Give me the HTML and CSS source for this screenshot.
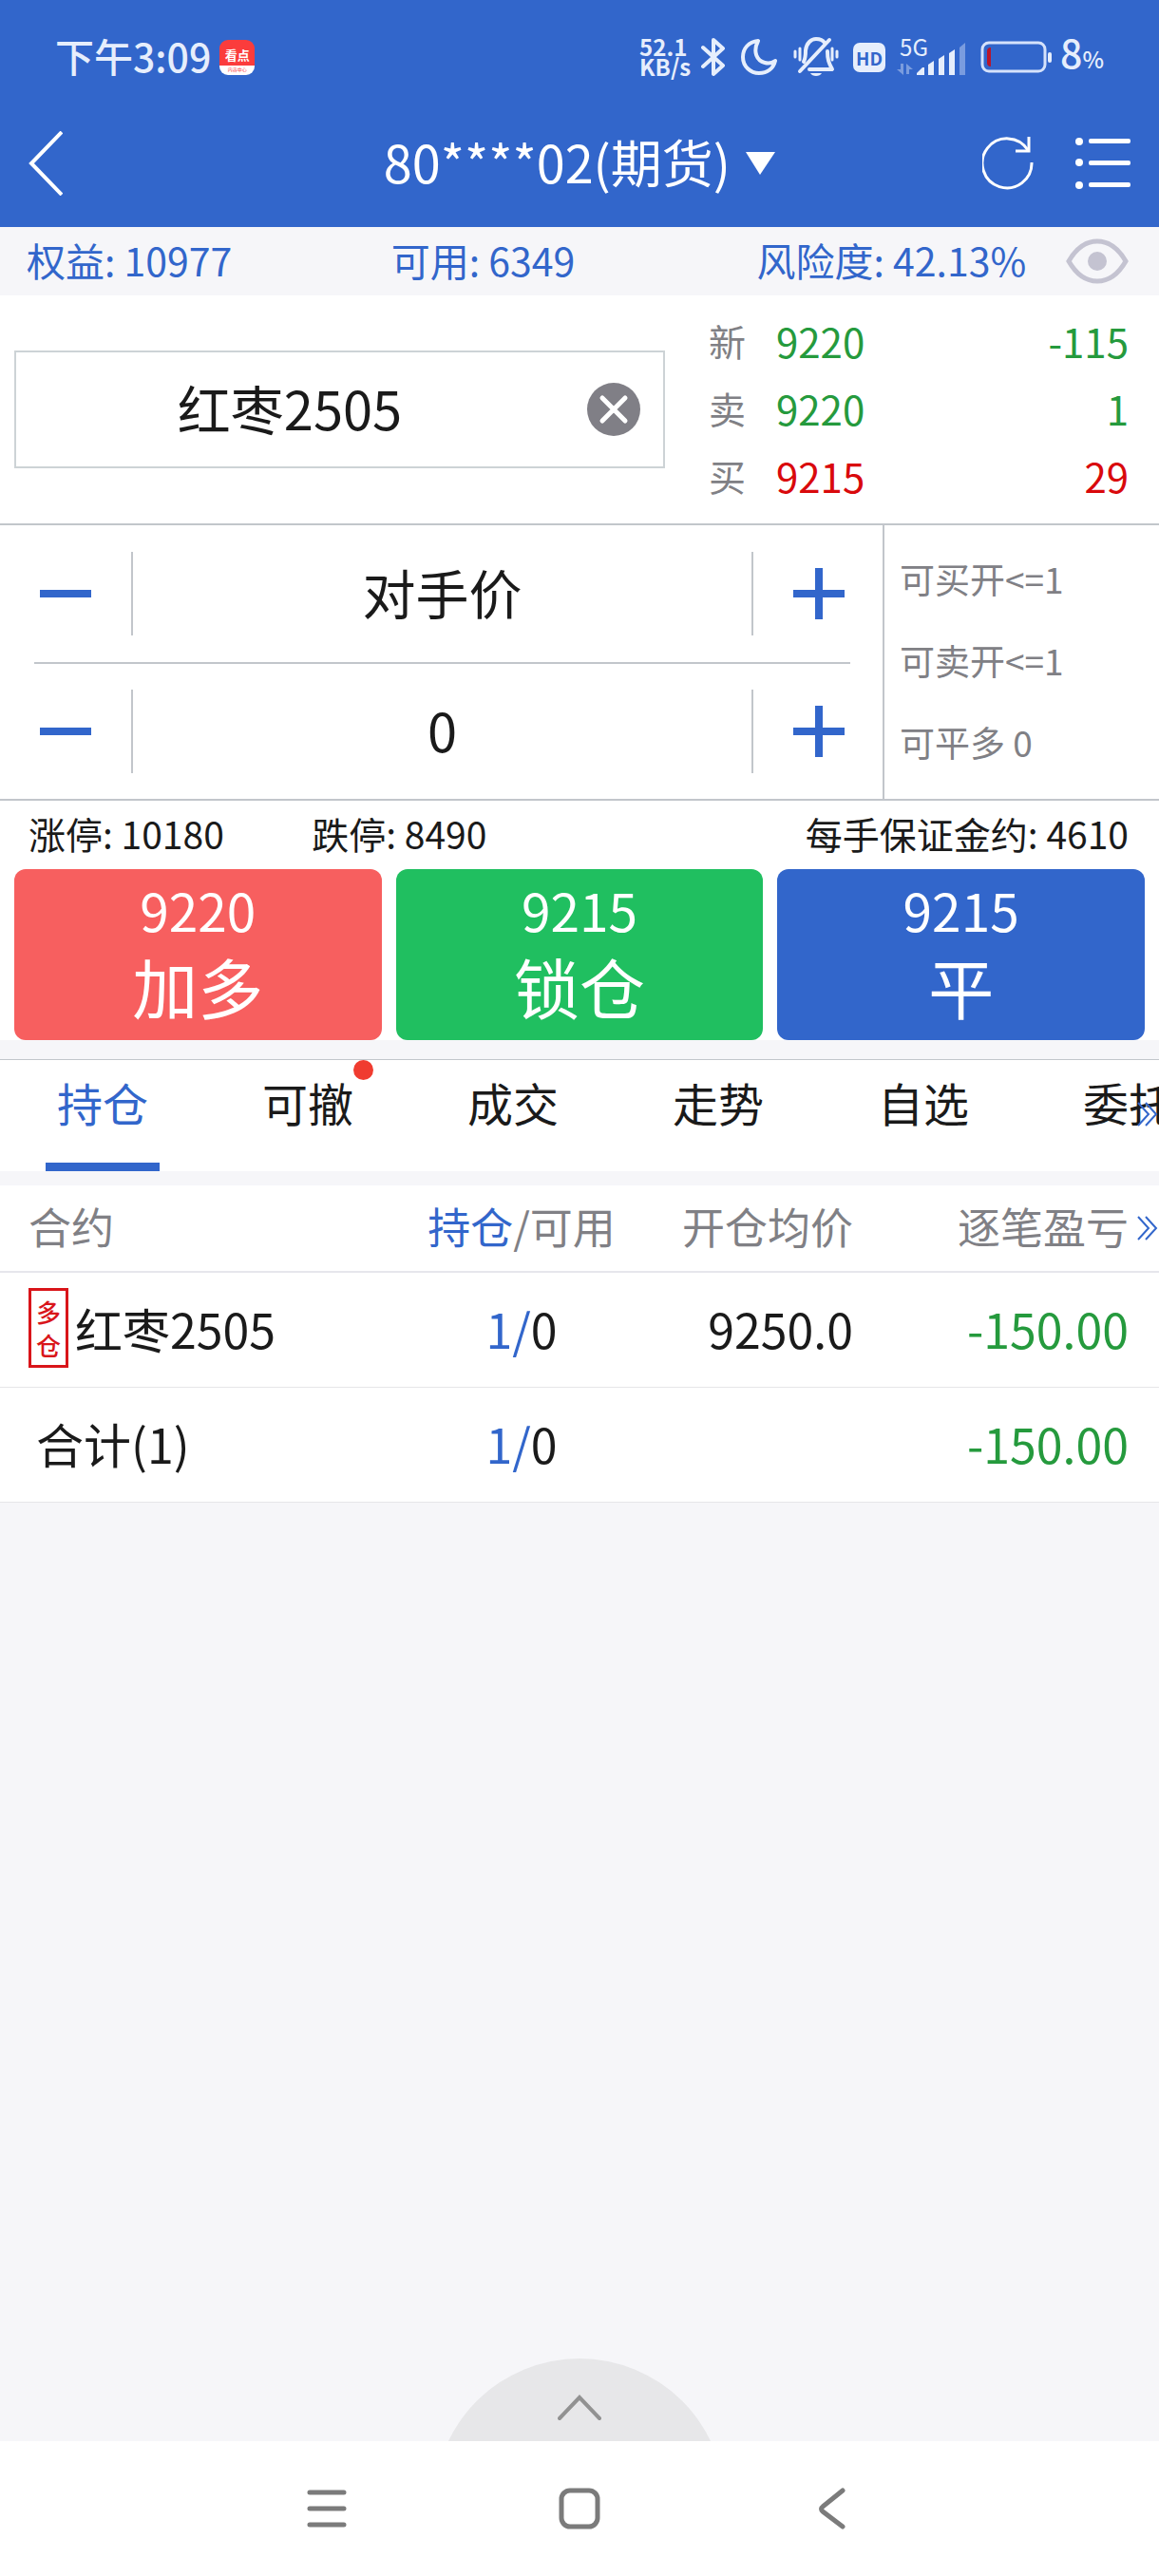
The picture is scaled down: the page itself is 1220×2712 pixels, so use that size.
FILE: index.html
```html
<!DOCTYPE html>
<html lang="zh-CN">
<head>
    <meta charset="UTF-8">
    <meta name="viewport" content="width=device-width, initial-scale=1.0">
    <title>期货交易</title>
    <link rel="stylesheet" href="styles.css">
</head>
<body>

    <header class="header">
        <div class="status-bar">
            <span class="clock">下午3:09</span>
            <span class="app-badge"><b>看点</b><i>内容中心</i></span>

            <div class="status-icons">
                <div class="net-speed"><span>52.1</span><span>KB/s</span></div>
                <svg width="26" height="42" viewBox="0 0 26 42" fill="none" stroke="#e6eefc" stroke-width="4" stroke-linejoin="round" stroke-linecap="round">
                    <path d="M2 11 L23 30 L13 39 V3 L23 12 L2 31"/>
                </svg>
                <svg class="moon" width="38" height="38" viewBox="0 0 38 38" fill="none" stroke="#e6eefc" stroke-width="4" stroke-linejoin="round">
                    <path d="M18 2 C8 3 2 10 2 19 C2 29 10 36 19 36 C28 36 34 31 36 23 C32 26 29 26 25 25 C17 23 12 14 18 2 Z"/>
                </svg>
                <svg class="bell" width="48" height="42" viewBox="0 0 48 42" fill="none" stroke="#e6eefc" stroke-width="3" stroke-linecap="round" stroke-linejoin="round">
                    <path d="M11 26 C13 22 13 19 13 14 C14 6 19 2 24 2 C28 2 31 3 33 6" stroke-width="4"/>
                    <path d="M36 15 C36 25 38 28 41 34 H17" stroke-width="4"/>
                    <path d="M38 3 L7 36" stroke-width="4"/>
                    <path d="M2 15 V21 M7 12 V24 M41 12 V24 M46 15 V21"/>
                    <path d="M18 38 H30 C28 42 20 42 18 38 Z" fill="#e6eefc" stroke="none"/>
                </svg>
                <span class="hd">HD</span>
                <div class="signal">
                    <span class="signal-type">5G</span>
                    <svg width="74" height="38" viewBox="0 0 74 38" fill="#e6eefc">
                        <g opacity="0.4">
                            <path d="M4 26 H7 V38 L0 32 H4 Z"/>
                            <path d="M10 26 L17 32 H13 V37 H10 Z"/>
                        </g>
                        <path d="M21 36 L27 30 H29 V38 H21 Z"/>
                        <path d="M33 27 L39 23 V38 H33 Z"/>
                        <path d="M44 21 L50 17 V38 H44 Z"/>
                        <path d="M55 15 L61 11 V38 H55 Z"/>
                        <path d="M66 9 L72 4 V38 H66 Z" opacity="0.4"/>
                    </svg>
                </div>
                <svg class="battery" width="76" height="34" viewBox="0 0 76 34">
                    <rect x="2" y="2" width="66" height="30" rx="7" fill="none" stroke="#d5e2fb" stroke-width="3"/>
                    <path d="M7 11 Q7 7 11 7 V27 Q7 27 7 23 Z" fill="#b9152b"/>
                    <rect x="71" y="12" width="4" height="11" rx="2" fill="#e6eefc"/>
                </svg>
                <span class="percent">8<small>%</small></span>
            </div>
        </div>

        <div class="title-bar">
            <button class="icon-btn" aria-label="返回">
                <svg width="36" height="68" viewBox="0 0 36 68" fill="none" stroke="#fff" stroke-width="4">
                    <path d="M35 1 L3 34 L35 67"/>
                </svg>
            </button>
            <button class="account">
                <span>80****02(期货)</span>
                <svg width="31" height="24" viewBox="0 0 31 24" fill="#fff"><path d="M0 0 H31 L15 24 Z"/></svg>
            </button>
            <div class="title-actions">
                <button class="icon-btn" aria-label="刷新">
                    <svg width="54" height="56" viewBox="0 0 54 56" fill="none" stroke="#fff" stroke-width="3">
                        <path d="M52 27 A26 26 0 1 1 48 14"/>
                        <path d="M49 0 V15 H35"/>
                    </svg>
                </button>
                <button class="icon-btn" aria-label="菜单">
                    <svg width="58" height="54" viewBox="0 0 58 54" fill="#fff">
                        <circle cx="4" cy="4" r="4"/><rect x="14" y="1" width="44" height="5" rx="2"/>
                        <circle cx="4" cy="26" r="4"/><rect x="14" y="24" width="44" height="5" rx="2"/>
                        <circle cx="4" cy="50" r="4"/><rect x="14" y="47" width="44" height="5" rx="2"/>
                    </svg>
                </button>
            </div>
        </div>
    </header>

    <div class="funds">
        <span>权益: 10977</span>
        <span>可用: 6349</span>
        <span>风险度: 42.13%</span>
        <button class="icon-btn" aria-label="显示资金">
            <svg width="66" height="48" viewBox="0 0 66 48" fill="none" stroke="#c4c3d1" stroke-width="5">
                <path d="M3 24 C19 -4 47 -4 63 24 C47 52 19 52 3 24 Z"/>
                <circle cx="33" cy="24" r="10" fill="#c4c3d1" stroke="none"/>
            </svg>
        </button>
    </div>

    <section class="quote">
        <div class="contract">
            <input type="text" value="红枣2505" aria-label="合约">
            <button class="icon-btn" aria-label="清除">
                <svg width="58" height="58" viewBox="0 0 58 58">
                    <circle cx="29" cy="29" r="28" fill="#807f86"/>
                    <path d="M17 17 L41 41 M41 17 L17 41" stroke="#fff" stroke-width="5" stroke-linecap="round"/>
                </svg>
            </button>
        </div>
        <div class="prices">
            <div class="price-row green"><span class="label">新</span><span>9220</span><span class="volume">-115</span></div>
            <div class="price-row green"><span class="label">卖</span><span>9220</span><span class="volume">1</span></div>
            <div class="price-row red"><span class="label">买</span><span>9215</span><span class="volume">29</span></div>
        </div>
    </section>

    <section class="order">
        <div class="steppers">
            <div class="stepper">
                <button class="step minus" aria-label="减价"></button>
                <input type="text" value="对手价" aria-label="价格">
                <button class="step plus" aria-label="加价"></button>
            </div>
            <div class="stepper">
                <button class="step minus" aria-label="减手数"></button>
                <input type="text" value="0" aria-label="手数">
                <button class="step plus" aria-label="加手数"></button>
            </div>
        </div>
        <div class="available">
            <span>可买开&lt;=1</span>
            <span>可卖开&lt;=1</span>
            <span>可平多 0</span>
        </div>
    </section>

    <div class="limits">
        <span>涨停: 10180</span>
        <span>跌停: 8490</span>
        <span class="margin">每手保证金约: 4610</span>
    </div>

    <div class="trade">
        <button class="trade-btn buy"><span>9220</span><strong>加多</strong></button>
        <button class="trade-btn lock"><span>9215</span><strong>锁仓</strong></button>
        <button class="trade-btn close"><span>9215</span><strong>平</strong></button>
    </div>

    <nav class="tabs">
        <button class="tab active">持仓</button>
        <button class="tab"><span class="dot"></span>可撤</button>
        <button class="tab">成交</button>
        <button class="tab">走势</button>
        <button class="tab">自选</button>
        <button class="tab">委托</button>
        <svg class="more" width="22" height="26" viewBox="0 0 22 26" fill="none" stroke="#3266cb" stroke-width="2">
            <path d="M1 1 L12 13 L1 25 M9 1 L20 13 L9 25"/>
        </svg>
    </nav>

    <div class="positions">
        <table>
            <thead>
                <tr>
                    <th class="col-name">合约</th>
                    <th class="col-hold"><span class="blue">持仓</span>/可用</th>
                    <th>开仓均价</th>
                    <th class="col-profit">逐笔盈亏</th>
                </tr>
            </thead>
            <tbody>
                <tr>
                    <td><div class="name"><span class="side">多仓</span>红枣2505</div></td>
                    <td><span class="blue">1/</span>0</td>
                    <td>9250.0</td>
                    <td class="green">-150.00</td>
                </tr>
                <tr>
                    <td class="total">合计(1)</td>
                    <td><span class="blue">1/</span>0</td>
                    <td></td>
                    <td class="green">-150.00</td>
                </tr>
            </tbody>
        </table>
        <svg class="more" width="22" height="26" viewBox="0 0 22 26" fill="none" stroke="#3266cb" stroke-width="2">
            <path d="M1 1 L12 13 L1 25 M9 1 L20 13 L9 25"/>
        </svg>
    </div>

    <div class="drawer">
        <button class="drawer-handle" aria-label="展开">
            <svg width="46" height="28" viewBox="0 0 46 28" fill="none" stroke="#929292" stroke-width="4" stroke-linecap="round">
                <path d="M2 25 L23 3 L44 25"/>
            </svg>
        </button>
    </div>

    <footer class="nav-bar">
        <button class="icon-btn" aria-label="最近任务">
            <svg width="44" height="44" viewBox="0 0 44 44" stroke="#7b7b7b" stroke-width="5" stroke-linecap="round">
                <path d="M4 5 H40 M4 22 H40 M4 39 H40"/>
            </svg>
        </button>
        <button class="icon-btn" aria-label="主屏幕">
            <svg width="44" height="44" viewBox="0 0 44 44" fill="none" stroke="#7b7b7b" stroke-width="5">
                <rect x="3" y="3" width="38" height="38" rx="9"/>
            </svg>
        </button>
        <button class="icon-btn" aria-label="返回上级">
            <svg width="44" height="44" viewBox="0 0 44 44" fill="none" stroke="#7b7b7b" stroke-width="5" stroke-linecap="round">
                <path d="M33 3 L12 20 Q9 22 12 25 L33 41"/>
            </svg>
        </button>
    </footer>

</body>
</html>
```

FILE: styles.css
```css
* {
    box-sizing: border-box;
}

body {
    margin: 0;
    min-height: 100vh;
    display: flex;
    flex-direction: column;
    font-family: "Noto Sans CJK SC", "Noto Sans", sans-serif;
    color: #1a1a1a;
    background-color: #f6f6f9;
    overflow-x: hidden;
}

button,
input {
    font-family: inherit;
    color: inherit;
    background: none;
    border: none;
    margin: 0;
    padding: 0;
}

button {
    cursor: pointer;
}

svg {
    display: block;
    flex: none;
}

.icon-btn {
    display: flex;
    align-items: center;
    justify-content: center;
}

.blue { color: #3266cb; }
.green { color: #259a3d; }
.red { color: #d9090c; }

/* Шапка */
.header {
    background-color: #3266cb;
    color: #fff;
}

.status-bar {
    display: flex;
    align-items: center;
    height: 104px;
    padding: 16px 58px 0 58px;
    color: #e6eefc;
}

.clock {
    padding-bottom: 4px;
    font-size: 41px;
    line-height: 42px;
    font-weight: 500;
}

.app-badge {
    display: flex;
    flex-direction: column;
    align-items: center;
    width: 37px;
    height: 37px;
    margin-left: 9px;
    padding-top: 8px;
    border-radius: 9px;
    overflow: hidden;
    color: #fff;
    background: linear-gradient(#fb3c3c 72%, #fff 72%);
}

.app-badge b {
    font-size: 13px;
    line-height: 16px;
}

.app-badge i {
    font-size: 5px;
    font-style: normal;
    line-height: 14px;
    color: #fb3c3c;
}

.status-icons {
    display: flex;
    align-items: center;
    margin-left: auto;
}

.net-speed {
    display: flex;
    flex-direction: column;
    margin-right: 11px;
    padding-bottom: 2px;
    font-size: 24px;
    line-height: 21px;
    font-weight: 700;
}

.moon {
    margin-left: 16px;
}

.bell {
    margin-left: 17px;
}

.hd {
    width: 34px;
    margin-left: 15px;
    border-radius: 7px;
    font-size: 19px;
    line-height: 31px;
    font-weight: 700;
    text-align: center;
    color: #3266cb;
    background-color: #e6eefc;
}

.signal {
    position: relative;
    margin-left: 12px;
}

.signal-type {
    position: absolute;
    top: -4px;
    left: 3px;
    font-size: 24px;
    line-height: 24px;
}

.battery {
    margin-left: 14px;
}

.percent {
    margin-left: 8px;
    padding-bottom: 4px;
    font-size: 41px;
    line-height: 42px;
    font-weight: 500;
}

.percent small {
    font-size: 24px;
}

.title-bar {
    display: grid;
    grid-template-columns: 1fr auto 1fr;
    align-items: center;
    height: 135px;
    padding: 0 30px;
}

.title-bar > .icon-btn {
    justify-self: start;
}

.account {
    display: flex;
    align-items: center;
    gap: 16px;
    font-size: 54px;
    line-height: 72px;
}

.account span {
    padding-bottom: 4px;
}

.title-actions {
    display: flex;
    justify-content: flex-end;
    gap: 44px;
}

/* Средства */
.funds {
    display: grid;
    grid-template-columns: 383fr 384fr 325fr auto;
    align-items: center;
    height: 72px;
    padding: 0 32px 0 28px;
    font-size: 41px;
    white-space: nowrap;
    color: #3266cb;
}

.funds span {
    padding-bottom: 4px;
}

/* Котировка */
.quote {
    display: grid;
    grid-template-columns: minmax(0, 685fr) minmax(0, 442fr);
    gap: 46px;
    align-items: center;
    height: 240px;
    padding: 0 32px 0 15px;
    background-color: #fff;
}

.contract {
    display: flex;
    align-items: center;
    height: 124px;
    padding-right: 23px;
    border: 2px solid #cdd3d6;
}

.contract input {
    flex: 1;
    min-width: 0;
    height: 100%;
    padding: 0 24px 6px 0;
    font-size: 56px;
    text-align: center;
}

.prices {
    display: flex;
    flex-direction: column;
    padding-bottom: 4px;
}

.price-row {
    display: grid;
    grid-template-columns: 71px 1fr auto;
    font-size: 42px;
    line-height: 71px;
}

.label {
    font-size: 39px;
    color: #808085;
}

/* Параметры заявки */
.order {
    display: grid;
    grid-template-columns: minmax(0, 931fr) minmax(0, 289fr);
    border-top: 2px solid #c2c6cb;
    border-bottom: 2px solid #c2c6cb;
    background-color: #fff;
}

.steppers {
    padding: 0 34px 0 36px;
    border-right: 2px solid #c2c6cb;
}

.stepper {
    display: flex;
    align-items: center;
    height: 144px;
}

.stepper + .stepper {
    border-top: 2px solid #c2c6cb;
}

.stepper input {
    flex: 1;
    min-width: 0;
    height: 88px;
    padding-bottom: 6px;
    font-size: 56px;
    text-align: center;
    border-left: 2px solid #c2c6cb;
    border-right: 2px solid #c2c6cb;
}

.step {
    width: 102px;
    height: 100px;
    background: linear-gradient(#3266cb, #3266cb) 6px center / 54px 8px no-repeat;
}

.plus {
    background:
        linear-gradient(#3266cb, #3266cb) right 6px center / 54px 8px no-repeat,
        linear-gradient(#3266cb, #3266cb) right 29px center / 8px 54px no-repeat;
}

.available {
    display: flex;
    flex-direction: column;
    justify-content: center;
    padding: 0 0 4px 16px;
    font-size: 37px;
    line-height: 86px;
    white-space: nowrap;
    color: #808085;
}

.limits {
    display: grid;
    grid-template-columns: 298fr 300fr 559fr;
    align-items: center;
    height: 72px;
    padding: 0 32px 4px 30px;
    font-size: 39px;
    white-space: nowrap;
    background-color: #fff;
}

.margin {
    text-align: right;
}

/* Кнопки сделки */
.trade {
    display: grid;
    grid-template-columns: repeat(3, 1fr);
    gap: 15px;
    padding: 0 15px;
    background-color: #fff;
}

.trade-btn {
    display: flex;
    flex-direction: column;
    align-items: center;
    justify-content: center;
    height: 180px;
    padding-bottom: 12px;
    border-radius: 12px;
    font-size: 55px;
    line-height: 78px;
    color: #fff;
}

.trade-btn strong {
    font-size: 69px;
    line-height: 84px;
    font-weight: 400;
}

.buy { background-color: #f75f5f; }
.lock { background-color: #20bf60; }
.close { background-color: #3266cb; }

/* Вкладки */
.tabs {
    position: relative;
    display: flex;
    margin-top: 20px;
    border-top: 1px solid #c2c6cb;
    overflow: hidden;
    background-color: #fff;
}

.tab {
    position: relative;
    flex: 0 0 216px;
    height: 117px;
    padding-bottom: 28px;
    font-size: 48px;
    line-height: 89px;
}

.tab.active {
    color: #3266cb;
}

.tab.active::after {
    content: "";
    position: absolute;
    left: 48px;
    right: 48px;
    bottom: 0;
    height: 9px;
    background-color: #3266cb;
}

.dot {
    position: absolute;
    top: 0;
    right: 39px;
    width: 21px;
    height: 21px;
    border-radius: 50%;
    background-color: #f03c30;
}

.more {
    position: absolute;
    right: 1px;
    top: 44px;
}

/* Позиции */
.positions {
    position: relative;
    margin-top: 15px;
    background-color: #fff;
}

.positions .more {
    top: 32px;
}

table {
    width: 100%;
    table-layout: fixed;
    border-collapse: separate;
    border-spacing: 0;
    white-space: nowrap;
}

th,
td {
    padding: 0 0 4px;
    text-align: right;
}

th {
    height: 92px;
    font-size: 45px;
    line-height: 60px;
    font-weight: 400;
    color: #808085;
    border-bottom: 2px solid #e6e6ec;
}

td {
    height: 121px;
    font-size: 50px;
    line-height: 72px;
    border-bottom: 1px solid #e6e6e8;
}

th:first-child,
td:first-child {
    padding-left: 30px;
    text-align: left;
}

th:nth-child(2),
td:nth-child(2) {
    text-align: center;
}

th:last-child,
td:last-child {
    padding-right: 32px;
}

.col-name { width: 36%; }
.col-hold { width: 18%; }
.col-profit { width: 322px; }

.name {
    display: flex;
    align-items: center;
    gap: 7px;
}

.side {
    width: 42px;
    height: 84px;
    padding: 4px 5px;
    border: 3px solid #d9151a;
    font-size: 26px;
    line-height: 35px;
    font-weight: 500;
    white-space: normal;
    word-break: break-all;
    color: #d9151a;
}

td.total:first-child {
    padding-left: 38px;
}

/* Нижняя шторка */
.drawer {
    display: flex;
    justify-content: center;
    height: 87px;
    margin-top: auto;
    overflow: hidden;
}

.drawer-handle {
    flex: none;
    display: flex;
    justify-content: center;
    align-items: flex-start;
    width: 306px;
    height: 306px;
    padding-top: 38px;
    border-radius: 50%;
    background-color: #e7e7e9;
}

.nav-bar {
    display: flex;
    justify-content: center;
    align-items: center;
    gap: 222px;
    height: 142px;
    background-color: #fff;
}
```
